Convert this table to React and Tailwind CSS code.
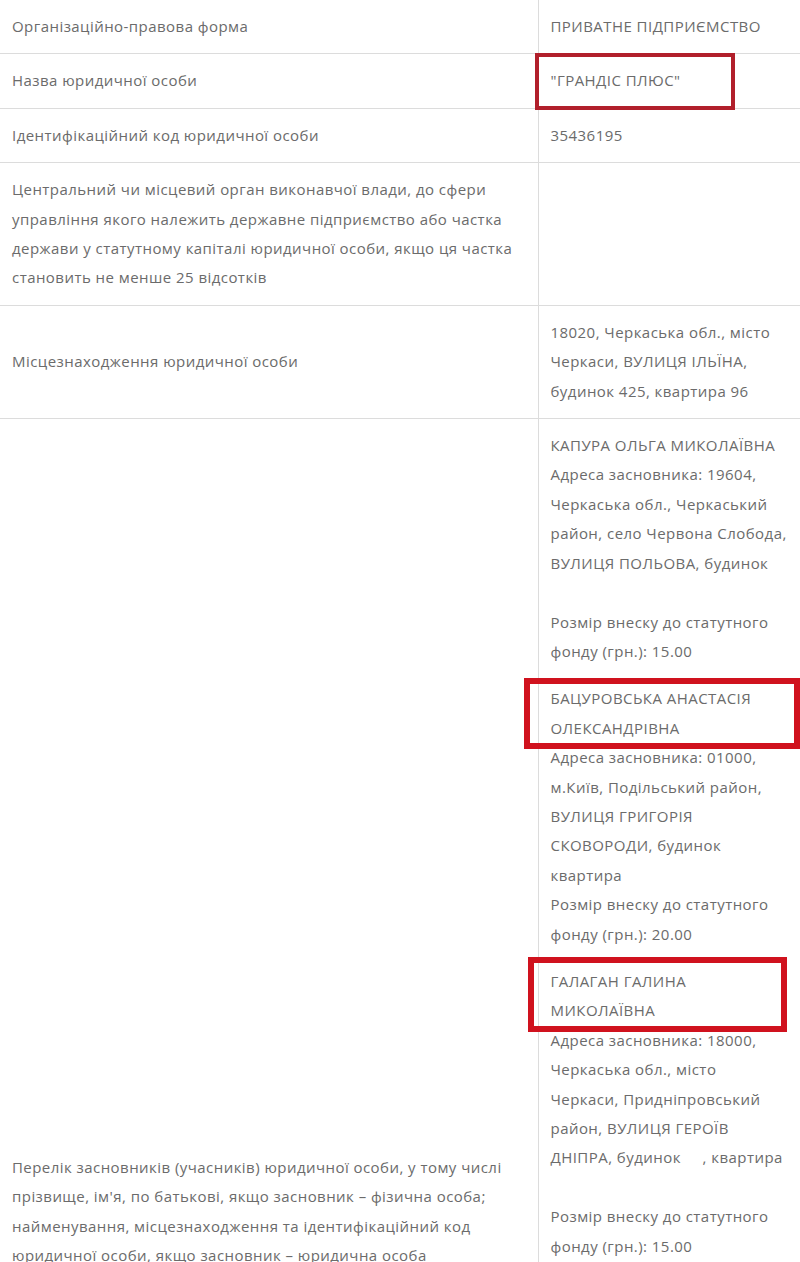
import React from 'react';

const rows = [
  { label: 'Організаційно-правова форма', value: ['ПРИВАТНЕ ПІДПРИЄМСТВО'] },
  { label: 'Назва юридичної особи', value: ['"ГРАНДІС ПЛЮС"'] },
  { label: 'Ідентифікаційний код юридичної особи', value: ['35436195'] },
  {
    label: [
      'Центральний чи місцевий орган виконавчої влади, до сфери',
      'управління якого належить державне підприємство або частка',
      'держави у статутному капіталі юридичної особи, якщо ця частка',
      'становить не менше 25 відсотків',
    ],
    value: [],
  },
  {
    label: 'Місцезнаходження юридичної особи',
    value: ['18020, Черкаська обл., місто', 'Черкаси, ВУЛИЦЯ ІЛЬЇНА,', 'будинок 425, квартира 96'],
  },
];

const founders = [
  [
    'КАПУРА ОЛЬГА МИКОЛАЇВНА',
    'Адреса засновника: 19604,',
    'Черкаська обл., Черкаський',
    'район, село Червона Слобода,',
    'ВУЛИЦЯ ПОЛЬОВА, будинок',
    '',
    'Розмір внеску до статутного',
    'фонду (грн.): 15.00',
  ],
  [
    'БАЦУРОВСЬКА АНАСТАСІЯ',
    'ОЛЕКСАНДРІВНА',
    'Адреса засновника: 01000,',
    'м.Київ, Подільський район,',
    'ВУЛИЦЯ ГРИГОРІЯ',
    'СКОВОРОДИ, будинок',
    'квартира',
    'Розмір внеску до статутного',
    'фонду (грн.): 20.00',
  ],
  [
    'ГАЛАГАН ГАЛИНА',
    'МИКОЛАЇВНА',
    'Адреса засновника: 18000,',
    'Черкаська обл., місто',
    'Черкаси, Придніпровський',
    'район, ВУЛИЦЯ ГЕРОЇВ',
    'ДНІПРА, будинок     , квартира',
    '',
    'Розмір внеску до статутного',
    'фонду (грн.): 15.00',
  ],
];

const Lines = ({ lines }) =>
  lines.map((l, i) => (
    <span key={i} className="block whitespace-pre">
      {l || '\u00a0'}
    </span>
  ));

export default function App() {
  return (
    <div
      className="relative w-[800px] h-[1262px] overflow-hidden bg-white text-[15px] tracking-[0.45px] leading-[29.4px] text-[#6b6b6b]"
      style={{ fontFamily: '"Open Sans", "Noto Sans", sans-serif' }}
    >
      <table className="w-[800px] border-collapse table-fixed">
        <colgroup>
          <col className="w-[538px]" />
          <col />
        </colgroup>
        <tbody>
          {rows.map((r, i) => (
            <tr key={i} className="border-b border-[#dcdcdc]">
              <td className="px-3 py-3 align-middle border-r border-[#dcdcdc]">
                {Array.isArray(r.label) ? <Lines lines={r.label} /> : r.label}
              </td>
              <td className="px-3 py-3 align-middle">
                <Lines lines={r.value} />
              </td>
            </tr>
          ))}
          <tr>
            <td className="px-3 py-3 align-middle border-r border-[#dcdcdc]">
              <Lines
                lines={[
                  'Перелік засновників (учасників) юридичної особи, у тому числі',
                  "прізвище, ім'я, по батькові, якщо засновник – фізична особа;",
                  'найменування, місцезнаходження та ідентифікаційний код',
                  'юридичної особи, якщо засновник – юридична особа',
                ]}
              />
            </td>
            <td className="px-3 py-3 align-top h-[1586px]">
              <div className="flex flex-col gap-[18px]">
                {founders.map((f, i) => (
                  <div key={i}>
                    <Lines lines={f} />
                  </div>
                ))}
              </div>
            </td>
          </tr>
        </tbody>
      </table>

      {/* red annotation boxes */}
      <div className="absolute left-[535px] top-[53px] w-[200px] h-[57px] border-[4px] border-[#b11f2b]" />
      <div className="absolute left-[524px] top-[678px] w-[276px] h-[71px] border-[6px] border-[#d0121e]" />
      <div className="absolute left-[528px] top-[957px] w-[259px] h-[75px] border-[6px] border-[#d0121e]" />
    </div>
  );
}
